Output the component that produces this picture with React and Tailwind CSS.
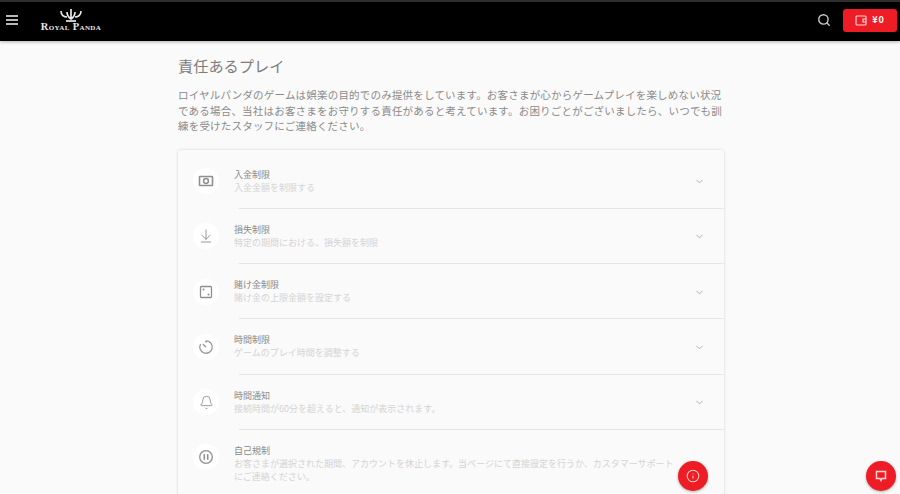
import React from "react";
import { Search, ArrowDownToLine, Bell, ChevronDown, Info } from "lucide-react";

const CashIcon = () => (
  <svg width="16" height="16" viewBox="0 0 16 16" fill="none" stroke="#8f8f8f">
    <rect x="1.5" y="3.5" width="13" height="9" rx="0.5" strokeWidth="1.6" />
    <circle cx="8" cy="8" r="2.4" strokeWidth="1.5" />
  </svg>
);

const DiceIcon = () => (
  <svg width="16" height="16" viewBox="0 0 16 16" fill="none" stroke="#8f8f8f">
    <rect x="2.5" y="2.5" width="11" height="11" rx="1" strokeWidth="1.3" />
    <circle cx="5.5" cy="5.5" r="1" fill="#8f8f8f" stroke="none" />
    <circle cx="10.5" cy="10.5" r="1" fill="#8f8f8f" stroke="none" />
  </svg>
);

const TimerIcon = () => (
  <svg width="16" height="16" viewBox="0 0 16 16" fill="none" stroke="#9a9a9a" strokeWidth="1.3">
    <path d="M8 1.8a6.2 6.2 0 1 1-5.4 3.2" />
    <path d="M8 1.5v2.2M5 5l3 3.2" />
  </svg>
);

const PauseIcon = () => (
  <svg width="16" height="16" viewBox="0 0 16 16" fill="none" stroke="#8f8f8f">
    <circle cx="8" cy="8" r="6.3" strokeWidth="1.3" />
    <path d="M6.3 5.3v5.4M9.7 5.3v5.4" strokeWidth="1.6" />
  </svg>
);

const rows = [
  { icon: <CashIcon />, title: "入金制限", text: "入金金額を制限する" },
  { icon: <ArrowDownToLine size={16} strokeWidth={1.4} className="text-[#8f8f8f]" />, title: "損失制限", text: "特定の期間における、損失額を制限" },
  { icon: <DiceIcon />, title: "賭け金制限", text: "賭け金の上限金額を設定する" },
  { icon: <TimerIcon />, title: "時間制限", text: "ゲームのプレイ時間を調整する" },
  { icon: <Bell size={15} strokeWidth={1.4} className="text-[#8f8f8f]" />, title: "時間通知", text: "接続時間が60分を超えると、通知が表示されます。" },
];

const Crown = () => (
  <svg width="22" height="13" viewBox="0 0 22 13" fill="none" stroke="#e8e8e8" strokeWidth="1.7">
    <path d="M1 2c0 4 3 6 6 6M21 2c0 4-3 6-6 6M11 0v9M7 3c0 3 1 5 4 7 3-2 4-4 4-7" />
    <path d="M6 12h10" />
  </svg>
);

const Row = ({ icon, title, text }) => (
  <div className="flex h-[54.25px] items-center pl-[15px] pr-[19px]">
    <div className="mt-[1px] flex h-[26px] w-[26px] shrink-0 items-center justify-center rounded-full bg-white">
      {icon}
    </div>
    <div className="ml-[15px] flex-1">
      <p className="text-[9px] leading-[13px] text-[#8a8a8a]">{title}</p>
      <p className="text-[9px] leading-[13px] text-[#d4d4d4]">{text}</p>
    </div>
    <ChevronDown size={11} strokeWidth={2} className="mt-[2px] text-[#a8a8a8]" />
  </div>
);

const App = () => {
  return (
    <div
      className="relative h-[494px] w-[900px] overflow-hidden bg-[#fafafa]"
      style={{ fontFamily: '"Noto Sans CJK JP", "Noto Sans", sans-serif' }}
    >
      <header className="flex h-[41px] items-center border-t-2 border-[#2e2e2e] bg-black pb-[3px] shadow-[0_1px_3px_rgba(0,0,0,0.3)]">
        <div className="ml-[6px] flex w-[12px] flex-col gap-[2.5px]">
          <div className="h-[1.5px] bg-[#b8b8b8]" />
          <div className="h-[1.5px] bg-[#b8b8b8]" />
          <div className="h-[1.5px] bg-[#b8b8b8]" />
        </div>
        <div className="ml-[22px] flex w-[62px] flex-col items-center">
          <Crown />
          <span
            className="text-[10.5px] font-bold leading-[10px] tracking-[0.35px] whitespace-nowrap text-[#e8e8e8]"
            style={{ fontFamily: '"Liberation Serif", serif', fontVariant: "small-caps" }}
          >
            Royal Panda
          </span>
        </div>
        <Search size={14} strokeWidth={2.4} className="ml-auto text-[#c8c8c8]" />
        <button className="ml-[12px] mr-[3px] flex h-[23px] w-[54px] items-center justify-center gap-[5px] rounded-[3px] bg-[#ee1c25] text-[9px] font-bold tracking-[1px] text-white">
          <svg width="12" height="11" viewBox="0 0 12 11" fill="none" stroke="#ffd5d7" strokeWidth="1.2">
            <rect x="1" y="1" width="10" height="9" rx="1" />
            <path d="M11 4H8v3h3" />
          </svg>
          <span>¥0</span>
        </button>
      </header>

      <main className="ml-[178px] w-[546px]">
        <h1 className="mt-[13px] text-[15.2px] leading-[22px] text-[#7d7d7d]">責任あるプレイ</h1>
        <p className="mt-[11px] text-[10.5px] leading-[15.5px] tracking-[0.2px] text-[#8a8a8a]">
          ロイヤルパンダのゲームは娯楽の目的でのみ提供をしています。お客さまが心からゲームプレイを楽しめない状況である場合、当社はお客さまをお守りする責任があると考えています。お困りごとがございましたら、いつでも訓練を受けたスタッフにご連絡ください。
        </p>
        <div className="mt-[16px] rounded-[3px] bg-[#fafafa] pt-[4px] shadow-[0_0_3px_rgba(0,0,0,0.16)]">
          {rows.map((r) => (
            <div key={r.title}>
              <Row {...r} />
              <div className="ml-[61px] h-px bg-[#e6e6e6]" />
            </div>
          ))}
          <div className="flex pl-[15px] pr-[44px] pt-[14px] pb-[20px]">
            <div className="flex h-[26px] w-[26px] shrink-0 items-center justify-center rounded-full bg-white">
              <PauseIcon />
            </div>
            <div className="ml-[15px] flex-1">
              <p className="text-[9px] leading-[13px] text-[#8a8a8a]">自己規制</p>
              <p className="text-[9px] leading-[13px] text-[#d4d4d4]">
                お客さまが選択された期間、アカウントを休止します。当ページにて直接設定を行うか、カスタマーサポートにご連絡ください。
              </p>
            </div>
          </div>
        </div>
      </main>

      <button className="absolute left-[678px] top-[461px] flex h-[30px] w-[30px] items-center justify-center rounded-full bg-[#ee1c25] text-[#ffc9cb] shadow-[0_1px_3px_rgba(0,0,0,0.3)]">
        <Info size={14} strokeWidth={1.8} />
      </button>
      <button className="absolute left-[866px] top-[461px] flex h-[30px] w-[30px] items-center justify-center rounded-full bg-[#ee1c25] shadow-[0_1px_3px_rgba(0,0,0,0.3)]">
        <svg width="12" height="12" viewBox="0 0 12 12" fill="none" stroke="#ffd5d7" strokeWidth="1.5">
          <path d="M1.5 1.5h9v7H7L6 10.5 5 8.5H1.5z" />
        </svg>
      </button>
    </div>
  );
};

export default App;
